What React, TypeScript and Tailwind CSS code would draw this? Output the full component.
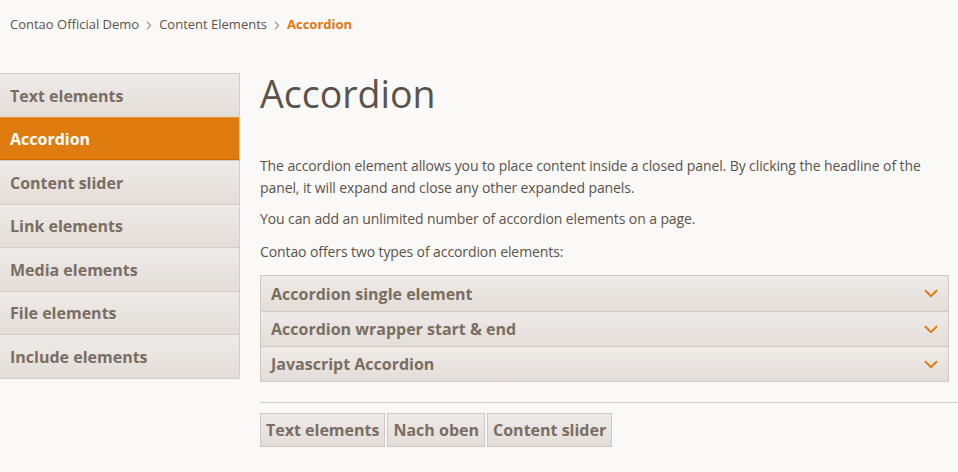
import React from "react";

const font = { fontFamily: '"Open Sans", "Noto Sans", sans-serif' };

function Chevron() {
  return (
    <svg width="14" height="9" viewBox="0 0 14 9" fill="none">
      <path d="M1 1.2 L7 7.2 L13 1.2" stroke="#e27a10" strokeWidth="2" />
    </svg>
  );
}

function Crumb() {
  return (
    <svg width="6" height="9" viewBox="0 0 6 9" fill="none" className="mx-[7px]">
      <path d="M1 0.8 L4.6 4.5 L1 8.2" stroke="#a8a098" strokeWidth="1.4" />
    </svg>
  );
}

const navItems = [
  "Text elements",
  "Accordion",
  "Content slider",
  "Link elements",
  "Media elements",
  "File elements",
  "Include elements",
];

const accItems = [
  "Accordion single element",
  "Accordion wrapper start & end",
  "Javascript Accordion",
];

export default function App() {
  return (
    <div className="w-[958px] h-[472px] overflow-hidden bg-[#faf9f8] text-[#5b5349]" style={font}>
      <div className="flex items-center pl-[10px] pt-[15px] h-[20px] text-[13px] box-content">
        <span>Contao Official Demo</span>
        <Crumb />
        <span>Content Elements</span>
        <Crumb />
        <span className="text-[#e0780f] font-bold">Accordion</span>
      </div>
      <div className="flex items-start mt-[38px]">
        <nav className="w-[240px] shrink-0 flex flex-col border-b border-r border-[#d4ccc6]">
          {navItems.map((n) =>
            n === "Accordion" ? (
              <div
                key={n}
                className="h-[43.5px] flex items-center pl-[10px] pt-[1px] bg-[#e07b10] text-white font-bold text-[16px] border-t border-b border-t-[#f08c22] border-b-[#cc6a06]"
              >
                {n}
              </div>
            ) : (
              <div
                key={n}
                className="h-[43.5px] flex items-center pl-[10px] pt-[1px] bg-gradient-to-b from-[#efebe8] to-[#e2ddd9] text-[#7a6e62] font-bold text-[16px] border-t border-[#d4ccc6]"
              >
                {n}
              </div>
            )
          )}
        </nav>
        <main className="flex-1 pl-[20px] pr-[9px]">
          <h1 className="text-[37.5px] leading-[44px] font-medium text-[#5b5349] -mt-[1px]">Accordion</h1>
          <div className="mt-[39px] text-[14px] leading-[21.5px] tracking-[-0.1px]">
            <p>
              The accordion element allows you to place content inside a closed panel. By clicking the headline of the panel, it will expand and close any other expanded panels.
            </p>
            <p className="mt-[10px]">You can add an unlimited number of accordion elements on a page.</p>
            <p className="mt-[11px]">Contao offers two types of accordion elements:</p>
          </div>
          <div className="mt-[13px] border border-[#d0c9c3]">
            {accItems.map((a, i) => (
              <div
                key={a}
                className={`h-[35px] flex items-center justify-between pl-[10px] pr-[10px] bg-gradient-to-b from-[#efebe8] to-[#e2ddd9] ${i > 0 ? "border-t border-[#d0c9c3]" : ""}`}
              >
                <span className="text-[16px] font-bold text-[#7a6e62]">{a}</span>
                <Chevron />
              </div>
            ))}
          </div>
          <div className="mt-[20px] -mr-[9px] border-t border-[#d4ccc6]" />
          <div className="mt-[10px] flex gap-[2px]">
            {["Text elements", "Nach oben", "Content slider"].map((b) => (
              <div
                key={b}
                className="h-[34px] flex items-center px-[5px] border border-[#d0c9c3] bg-gradient-to-b from-[#efebe8] to-[#e2ddd9] text-[16px] font-bold text-[#7a6e62]"
              >
                {b}
              </div>
            ))}
          </div>
        </main>
      </div>
    </div>
  );
}
